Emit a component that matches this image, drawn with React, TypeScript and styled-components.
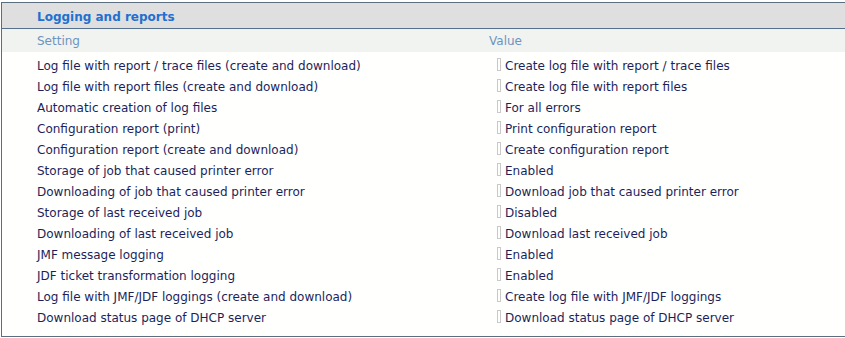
import styled, { createGlobalStyle } from "styled-components";

const GlobalStyle = createGlobalStyle`
  body {
    margin: 0;
    background: #ffffff;
    font-family: "DejaVu Sans", Verdana, sans-serif;
  }
`;

const Panel = styled.section`
  margin: 2px 0 0 1px;
  border: 1px solid #5b6e80;
  border-right: none;
  background: #fffffd;
  height: 335px;
  box-sizing: border-box;
`;

const TitleBar = styled.div`
  height: 26px;
  background: #dfdfdf;
  border-bottom: 1px solid #55708f;
  display: flex;
  align-items: center;
  padding: 2px 0 0 35px;
  box-sizing: border-box;
`;

const Title = styled.h2`
  margin: 0;
  font-size: 12px;
  font-weight: bold;
  color: #2170d0;
`;

const Grid = styled.div`
  display: grid;
  grid-template-columns: 452px 1fr;
  padding-left: 35px;
`;

const Row = styled.div`
  display: contents;
`;

const HeadCell = styled.div<{ $first?: boolean }>`
  height: 23px;
  box-sizing: border-box;
  padding-top: 1px;
  margin-bottom: 3px;
  margin-left: ${(p) => (p.$first ? "-35px" : "0")};
  padding-left: ${(p) => (p.$first ? "35px" : "0")};
  background: #f1f3f1;
  color: #6e93c0;
  font-size: 12px;
  display: flex;
  align-items: center;
`;

const Cell = styled.div`
  height: 21px;
  display: flex;
  align-items: center;
  font-size: 12px;
  color: #1d1f5c;
  white-space: nowrap;
`;

const ValueIcon = styled.span`
  display: inline-block;
  width: 2px;
  height: 11px;
  border: 1px solid #c9c9c9;
  margin: 0 4px 2px 8px;
`;

const rows: [string, string][] = [
  ["Log file with report / trace files (create and download)", "Create log file with report / trace files"],
  ["Log file with report files (create and download)", "Create log file with report files"],
  ["Automatic creation of log files", "For all errors"],
  ["Configuration report (print)", "Print configuration report"],
  ["Configuration report (create and download)", "Create configuration report"],
  ["Storage of job that caused printer error", "Enabled"],
  ["Downloading of job that caused printer error", "Download job that caused printer error"],
  ["Storage of last received job", "Disabled"],
  ["Downloading of last received job", "Download last received job"],
  ["JMF message logging", "Enabled"],
  ["JDF ticket transformation logging", "Enabled"],
  ["Log file with JMF/JDF loggings (create and download)", "Create log file with JMF/JDF loggings"],
  ["Download status page of DHCP server", "Download status page of DHCP server"],
];

const App = () => {
  return (
    <>
      <GlobalStyle />
      <Panel>
        <TitleBar>
          <Title>Logging and reports</Title>
        </TitleBar>
        <Grid>
          <Row>
            <HeadCell $first>Setting</HeadCell>
            <HeadCell>Value</HeadCell>
          </Row>
          {rows.map(([setting, value]) => (
            <Row key={setting}>
              <Cell>{setting}</Cell>
              <Cell>
                <ValueIcon />
                {value}
              </Cell>
            </Row>
          ))}
        </Grid>
      </Panel>
    </>
  );
};

export default App;
